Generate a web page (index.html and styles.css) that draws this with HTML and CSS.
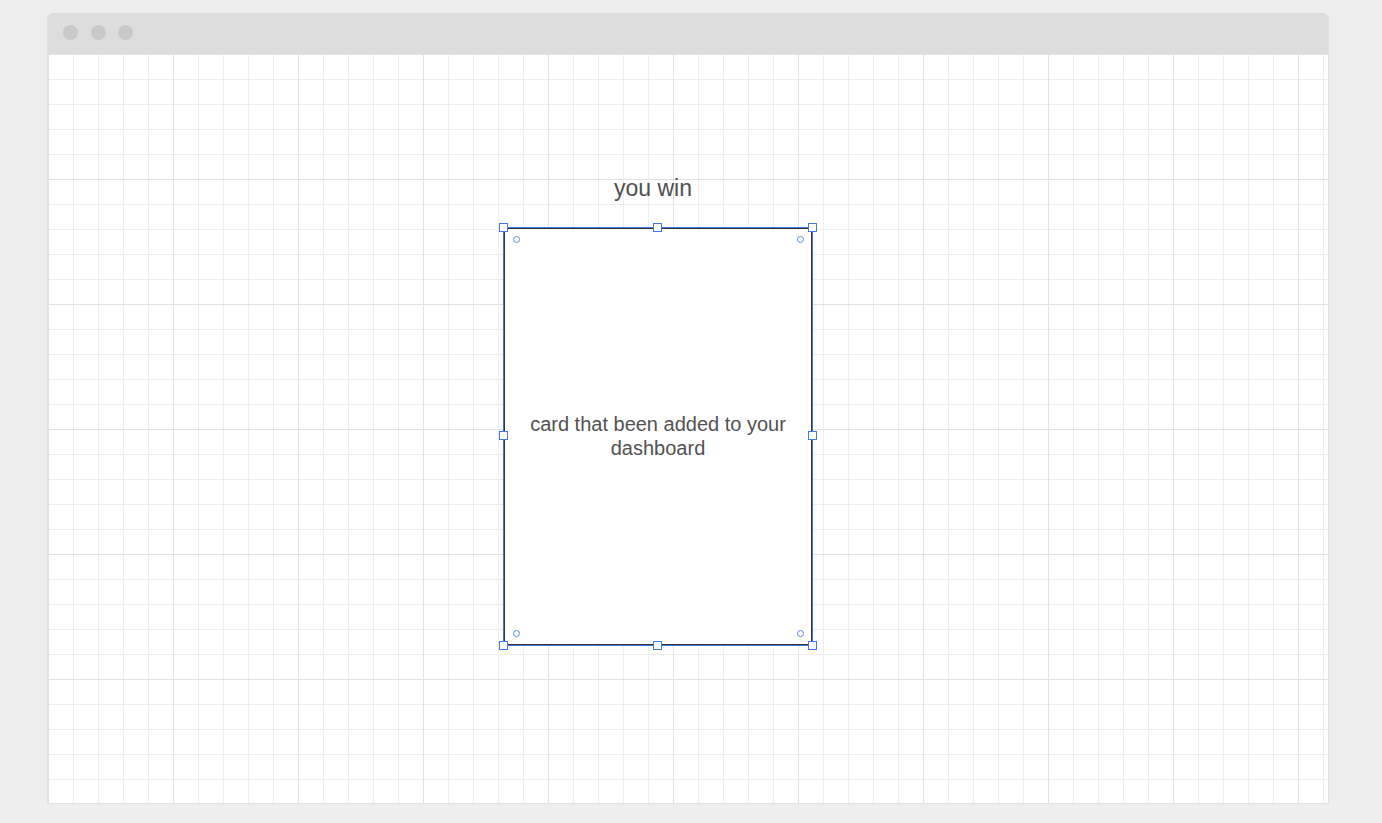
FILE: index.html
```html
<!DOCTYPE html>
<html lang="en">
<head>
<meta charset="utf-8">
<title>you win</title>
<link rel="stylesheet" href="styles.css">
</head>
<body>
<div class="window">
  <div class="titlebar">
    <span class="dot"></span>
    <span class="dot"></span>
    <span class="dot"></span>
  </div>
  <div class="canvas">
    <div class="title">you win</div>
    <div class="card">
      <p class="card-text">card that been added to your dashboard</p>
    </div>
    <div class="selection">
      <span class="handle h-tl"></span>
      <span class="handle h-tm"></span>
      <span class="handle h-tr"></span>
      <span class="handle h-ml"></span>
      <span class="handle h-mr"></span>
      <span class="handle h-bl"></span>
      <span class="handle h-bm"></span>
      <span class="handle h-br"></span>
      <span class="ring r-tl"></span>
      <span class="ring r-tr"></span>
      <span class="ring r-bl"></span>
      <span class="ring r-br"></span>
    </div>
  </div>
</div>
</body>
</html>
```

FILE: styles.css
```css
html, body {
  margin: 0;
  padding: 0;
  background: #eeeeee;
}
body {
  padding: 13px 0 0 47px;
  font-family: "Liberation Sans", Arial, sans-serif;
}
.window {
  width: 1282px;
  height: 791px;
  box-sizing: border-box;
  border: 1px solid #e2e2e2;
  border-top: none;
  border-radius: 6px 6px 0 0;
  background: #ffffff;
  display: flex;
  flex-direction: column;
  overflow: hidden;
}
.titlebar {
  height: 41px;
  flex: none;
  background: #dddddd;
  display: flex;
  align-items: flex-start;
  gap: 13px;
  padding-left: 15px;
  padding-top: 12px;
  box-sizing: border-box;
}
.dot {
  width: 15px;
  height: 15px;
  border-radius: 50%;
  background: #c9c9c9;
}
.dot + .dot + .dot { margin-left: -1px; }
.canvas {
  position: relative;
  flex: 1;
  background-color: #ffffff;
  background-image:
    linear-gradient(to right, transparent 124px, #e2e2e2 124px),
    linear-gradient(to bottom, transparent 124px, #e2e2e2 124px),
    linear-gradient(to right, transparent 24px, #eeeeee 24px),
    linear-gradient(to bottom, transparent 24px, #eeeeee 24px);
  background-size: 125px 125px, 125px 125px, 25px 25px, 25px 25px;
  background-position: 1px 1px, 1px 1px, 1px 1px, 1px 1px;
}
.title {
  position: absolute;
  left: 455px;
  top: 120px;
  width: 300px;
  text-align: center;
  font-size: 23px;
  line-height: 28px;
  color: #505050;
}
.card {
  position: absolute;
  left: 456px;
  top: 174px;
  width: 308px;
  height: 417px;
  box-sizing: border-box;
  border: 1px solid #333333;
  background: #ffffff;
  display: flex;
  align-items: center;
  justify-content: center;
  padding-bottom: 2px;
}
.card-text {
  margin: 0;
  padding: 0 8px;
  text-align: center;
  font-size: 20px;
  line-height: 24px;
  color: #525252;
}
.selection {
  position: absolute;
  left: 455px;
  top: 173px;
  width: 310px;
  height: 419px;
  box-sizing: border-box;
  border: 1px solid #3f76ec;
  pointer-events: none;
}
.handle {
  position: absolute;
  width: 9px;
  height: 9px;
  box-sizing: border-box;
  border: 1px solid #4479ea;
  background: #ffffff;
}
.h-tl { left: -5px; top: -5px; }
.h-tm { left: 149px; top: -5px; }
.h-tr { left: 304px; top: -5px; }
.h-ml { left: -5px; top: 203px; }
.h-mr { left: 304px; top: 203px; }
.h-bl { left: -5px; top: 413px; }
.h-bm { left: 149px; top: 413px; }
.h-br { left: 304px; top: 413px; }
.ring {
  position: absolute;
  width: 7px;
  height: 7px;
  box-sizing: border-box;
  border: 1px solid #5b8af0;
  border-radius: 50%;
}
.r-tl { left: 9px; top: 8px; }
.r-tr { left: 293px; top: 8px; }
.r-bl { left: 9px; top: 402px; }
.r-br { left: 293px; top: 402px; }
```
